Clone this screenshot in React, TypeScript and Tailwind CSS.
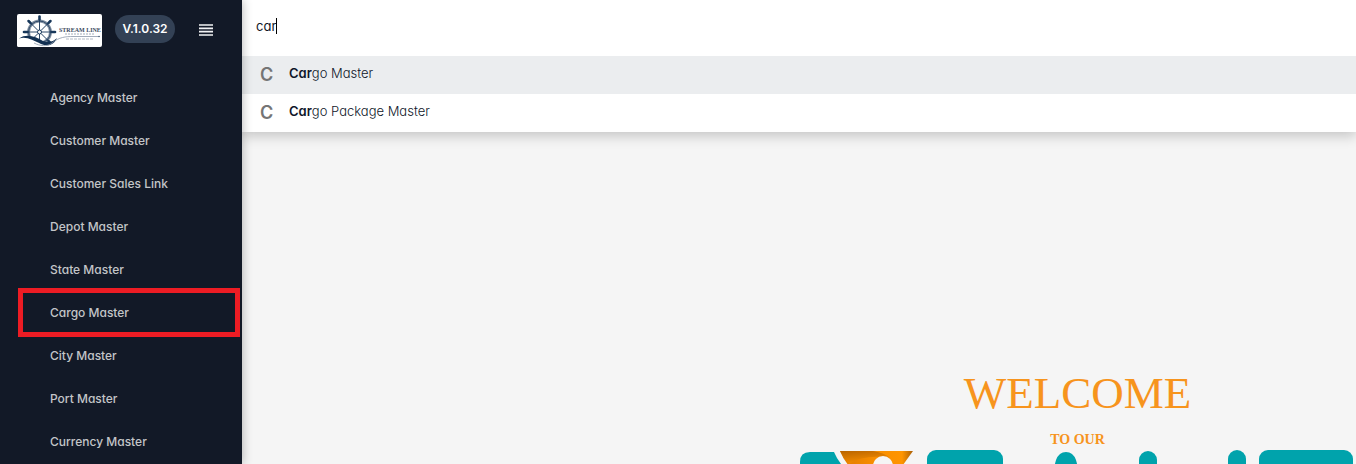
import { useState } from 'react';

const menuItems = [
  'Agency Master',
  'Customer Master',
  'Customer Sales Link',
  'Depot Master',
  'State Master',
  'Cargo Master',
  'City Master',
  'Port Master',
  'Currency Master',
];

const pages = ['Cargo Master', 'Cargo Package Master'];

const spokes = [0, 45, 90, 135, 180, 225, 270, 315];

function CompanyLogo() {
  return (
    <svg viewBox="0 0 85 33" className="h-[33px] w-[85px] shrink-0 rounded-xs bg-white" role="img" aria-label="Stream Line">
      <g stroke="#17375a" fill="none">
        <circle cx="22.5" cy="18" r="11" strokeWidth="3" stroke="#8291a3" />
        <circle cx="22.5" cy="18" r="11" strokeWidth="1" stroke="#2f4a69" />
        <circle cx="22.5" cy="18" r="2" strokeWidth="1" />
        {spokes.map((angle) => (
          <g key={angle} transform={`rotate(${angle} 22.5 18)`}>
            <path d="M22.5 16V6" strokeWidth="0.9" />
            <path d="M22.5 5.500V2.500" strokeWidth="2.6" strokeLinecap="round" />
          </g>
        ))}
      </g>
      <path d="M0 25C8 19 17 23 25 28C30 31 35 31 41 27L46 33H0Z" fill="#fff" />
      <path d="M2 24.500C10 19 19 23 26 27C31 29 36 28 40 24C37 31 31 33 24 30C16 26 9 22 2 24.500Z" fill="#123052" />
      <path d="M17 29C23 32 30 33 35 29C42 23 49 22.500 56 22.500H83" fill="none" stroke="#8a97a8" strokeWidth="0.8" />
      <circle cx="82" cy="22.5" r="0.8" fill="#52677f" />
      <text x="42" y="18" fontSize="6" fontWeight="700" fontFamily="Liberation Serif, serif" fill="#3a4a60">
        STREAM LINE
      </text>
      <path d="M48 20H78" stroke="#a3adb9" strokeWidth="1" strokeDasharray="2 1" />
      <path d="M49 25H77" stroke="#b4bcc6" strokeWidth="1" strokeDasharray="3 1" />
    </svg>
  );
}

function Sidebar() {
  return (
    <aside className="relative z-20 w-[242px] shrink-0 bg-[#121927] shadow-[0_0_10px_rgba(0,0,0,0.3)]">
      <div className="flex h-[60px] items-center pl-[17px]">
        <CompanyLogo />
        <span className="mb-0.5 ml-[13px] flex h-7 w-[60px] items-center justify-center rounded-full bg-[#334155] text-xs font-semibold text-white">
          V.1.0.32
        </span>
        <button type="button" aria-label="Toggle menu" className="ml-6">
          <svg viewBox="0 0 14 12" className="h-3 w-3.5" stroke="#f1f2f4" strokeWidth="1.700">
            <path d="M0 1H14M0 4.300H14M0 7.600H14M0 11H14" />
          </svg>
        </button>
      </div>

      <nav className="pt-4">
        <ul>
          {menuItems.map((item) => (
            <li key={item} className="relative">
              <a href="#" className="flex h-[43px] items-center pl-[50px] text-xs font-medium text-[#c3c5c8]">
                {item}
              </a>
              {item === 'Cargo Master' && (
                <span className="pointer-events-none absolute -inset-y-[3px] right-0.5 left-[18px] border-5 border-[#ed1c24]" />
              )}
            </li>
          ))}
        </ul>
      </nav>
    </aside>
  );
}

function SearchPanel() {
  const [query, setQuery] = useState('car');
  const matches = pages.filter((page) => page.toLowerCase().startsWith(query.toLowerCase()));

  return (
    <div className="relative z-10 bg-white shadow-[0_4px_12px_rgba(0,0,0,0.2)]">
      <div className="grid h-14 items-start pt-4 pl-3.5 text-[13px] leading-5 text-[#111827]">
        <input
          type="text"
          aria-label="Search"
          value={query}
          onChange={(e) => setQuery(e.target.value)}
          className="col-start-1 row-start-1 w-full bg-transparent caret-transparent outline-none"
        />
        {/* Caret */}
        <span aria-hidden="true" className="pointer-events-none col-start-1 row-start-1 flex h-5 items-center">
          <span className="invisible">{query}</span>
          <span className="h-4 w-px bg-black" />
        </span>
      </div>

      <ul>
        {matches.map((page, i) => (
          <li key={page}>
            <a
              href="#"
              className={`flex h-[38px] items-center pl-[18px] text-[13px] font-light text-[#0f172a] ${i === 0 ? 'bg-[#ebedef]' : 'bg-white'}`}
            >
              <span className="w-[29px] text-lg font-semibold text-[#757575]">{page[0]}</span>
              <span className="pb-0.5">
                <b className="font-semibold">{page.slice(0, query.length)}</b>
                {page.slice(query.length)}
              </span>
            </a>
          </li>
        ))}
      </ul>
    </div>
  );
}

function Welcome() {
  return (
    <section className="grid grid-cols-2 pt-[235px]">
      <div className="col-start-2 text-center font-['Liberation_Serif',serif] text-[#f7941d]">
        <h1 className="text-[45px] leading-[52px]">WELCOME</h1>
        <p className="mt-[13px] text-sm leading-4 font-bold">TO OUR</p>
        <svg viewBox="0 0 557 120" className="mt-0.5 w-full" role="img" aria-label="Company logo">
          <defs>
            <linearGradient id="flame" x1="0" y1="0" x2="1" y2="0">
              <stop offset="0" stopColor="#e07a00" />
              <stop offset="0.500" stopColor="#f98f00" />
              <stop offset="0.850" stopColor="#ff9500" />
              <stop offset="1" stopColor="#a85f08" />
            </linearGradient>
            <linearGradient id="fold" x1="0" y1="0" x2="0.400" y2="1">
              <stop offset="0" stopColor="#b86400" />
              <stop offset="1" stopColor="#f98f00" />
            </linearGradient>
          </defs>
          <g fill="#00a3ac">
            <path d="M1 120V12Q1 2 11 2H35Q40 14 50 22V120Z" />
            <rect x="128" y="0" width="76" height="26" rx="9" />
            <path d="M244 58L257 10Q260 2 267 2Q274 2 277 10L290 58Z" />
            <rect x="340" y="1" width="18" height="117" rx="9" />
            <rect x="429" y="0" width="18" height="117" rx="9" />
            <rect x="460" y="0" width="94" height="26" rx="9" />
          </g>
          <path d="M41 1H114L96 26H60Q46 14 41 1Z" fill="url(#flame)" />
          <path d="M41 1H74Q86 3 91 8Q66 4 50 14Q44 8 41 1Z" fill="url(#fold)" />
          <circle cx="84" cy="16" r="10" fill="#f5f5f5" />
        </svg>
      </div>
    </section>
  );
}

export default function App() {
  return (
    <div className="flex h-screen overflow-hidden bg-[#f5f5f5] font-['Inter',sans-serif] [font-feature-settings:'cv11']">
      <Sidebar />
      <main className="min-w-0 flex-1">
        <SearchPanel />
        <Welcome />
      </main>
    </div>
  );
}
